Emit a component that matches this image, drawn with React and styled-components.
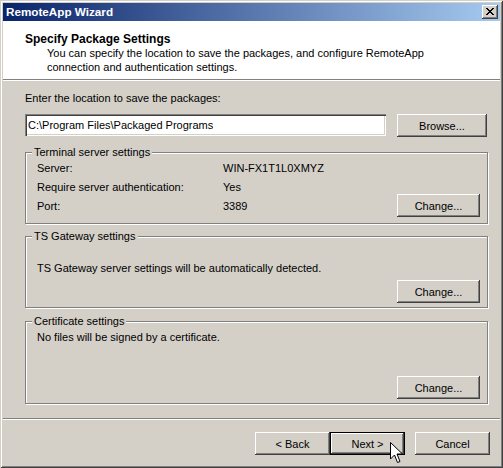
import React from 'react';
import styled, { createGlobalStyle } from 'styled-components';

const Global = createGlobalStyle`
  html, body { margin: 0; padding: 0; background: #d4d0c8; }
  body {
    font-family: "Liberation Sans", Arial, sans-serif;
    font-size: 11px;
    color: #000;
  }
  * { box-sizing: border-box; }
`;

const Window = styled.div`
  position: relative;
  width: 503px;
  height: 468px;
  padding: 3px;
  background: #d4d0c8;
  box-shadow: inset 1px 1px 0 #d4d0c8, inset -1px -1px 0 #404040,
    inset 2px 2px 0 #fff, inset -2px -2px 0 #808080;
  display: flex;
  flex-direction: column;
  overflow: hidden;
`;

const TitleBar = styled.div`
  flex: none;
  height: 18px;
  display: flex;
  align-items: center;
  justify-content: space-between;
  padding: 0 2px 0 3px;
  background: linear-gradient(to right, #0a246a 0%, #a6caf0 100%);
`;

const TitleText = styled.span`
  color: #fff;
  font-weight: bold;
  font-size: 11.7px;
  line-height: 14px;
`;

const Bevel = `
  background: #d4d0c8;
  box-shadow: inset -1px -1px 0 #404040, inset 1px 1px 0 #fff,
    inset -2px -2px 0 #808080, inset 2px 2px 0 #d4d0c8;
`;

const CloseButton = styled.div`
  ${Bevel}
  width: 16px;
  height: 14px;
  display: flex;
  align-items: center;
  justify-content: center;
  padding: 0 1px 1px 0;
`;

const Header = styled.div`
  flex: none;
  height: 58px;
  background: #fff;
  padding: 11px 0 0 22px;
`;

const Heading = styled.div`
  font-weight: bold;
  font-size: 12px;
  line-height: 14px;
`;

const Description = styled.p`
  margin: 0 0 0 22px;
  line-height: 14px;
  max-width: 395px;
`;

const Rule = styled.div`
  flex: none;
  height: 2px;
  border-top: 1px solid #808080;
  border-bottom: 1px solid #fff;
  margin-top: ${(p) => p.$top || 0}px;
`;

const Body = styled.div`
  flex: none;
  padding: 10px 0 0 22px;
`;

const Label = styled.div`
  line-height: 14px;
`;

const PathRow = styled.div`
  display: flex;
  align-items: flex-start;
  margin-top: 9px;
`;

const TextField = styled.div`
  width: 361px;
  height: 22px;
  background: #fff;
  padding: 0 0 0 3px;
  display: flex;
  align-items: center;
  box-shadow: inset 1px 1px 0 #808080, inset 2px 2px 0 #404040,
    inset -1px -1px 0 #fff, inset -2px -2px 0 #d4d0c8;
`;

const Button = styled.div`
  ${Bevel}
  flex: none;
  width: ${(p) => p.$w || 75}px;
  height: 23px;
  margin-left: ${(p) => p.$ml || 0}px;
  display: flex;
  align-items: center;
  justify-content: center;
  line-height: 14px;
  ${(p) =>
    p.$default &&
    `
    box-shadow: inset 0 0 0 1px #000, inset -2px -2px 0 #404040, inset 2px 2px 0 #fff,
      inset -3px -3px 0 #808080;
  `}
`;

const Group = styled.div`
  position: relative;
  width: 463px;
  height: ${(p) => p.$h}px;
  margin-top: ${(p) => p.$top}px;
  border: 1px solid #808080;
  box-shadow: 1px 1px 0 #fff, inset 1px 1px 0 #fff;
  padding: ${(p) => p.$pt}px 7px 4px 11px;
  display: flex;
  flex-direction: column;
`;

const Legend = styled.span`
  position: absolute;
  top: -8px;
  left: ${(p) => p.$left || 6}px;
  padding: 0 2px;
  background: #d4d0c8;
  line-height: 14px;
`;

const GroupRow = styled.div`
  display: flex;
  align-items: flex-end;
  justify-content: space-between;
`;

const InfoGrid = styled.div`
  display: grid;
  grid-template-columns: 186px auto;
  row-gap: 5px;
  line-height: 14px;
  padding-bottom: 4px;
`;

const Note = styled.div`
  line-height: 14px;
`;

const ButtonEnd = styled.div`
  display: flex;
  justify-content: flex-end;
  margin-top: ${(p) => (p.$auto ? 'auto' : `${p.$mt}px`)};
`;

const Footer = styled.div`
  display: flex;
  justify-content: flex-end;
  padding: 12px 10px 0 0;
`;

const Cursor = styled.svg`
  position: absolute;
  left: 390px;
  top: 442px;
  pointer-events: none;
`;

export default function App() {
  return (
    <>
      <Global />
      <Window>
        <TitleBar>
          <TitleText>RemoteApp Wizard</TitleText>
          <CloseButton>
            <svg width="8" height="7" viewBox="0 0 8 7" shapeRendering="crispEdges">
              <path
                d="M0 0h2v1h-2zM6 0h2v1h-2zM1 1h2v1h-2zM5 1h2v1h-2zM2 2h4v1h-4zM3 3h2v1h-2zM2 4h4v1h-4zM1 5h2v1h-2zM5 5h2v1h-2zM0 6h2v1h-2zM6 6h2v1h-2z"
                fill="#000"
              />
            </svg>
          </CloseButton>
        </TitleBar>
        <Header>
          <Heading>Specify Package Settings</Heading>
          <Description>
            You can specify the location to save the packages, and configure RemoteApp connection
            and authentication settings.
          </Description>
        </Header>
        <Rule />
        <Body>
          <Label>Enter the location to save the packages:</Label>
          <PathRow>
            <TextField>C:\Program Files\Packaged Programs</TextField>
            <Button $w={90} $ml={11}>
              Browse...
            </Button>
          </PathRow>

          <Group $h={72} $top={15} $pt={8}>
            <Legend>Terminal server settings</Legend>
            <GroupRow>
              <InfoGrid>
                <span>Server:</span>
                <span>WIN-FX1T1L0XMYZ</span>
                <span>Require server authentication:</span>
                <span>Yes</span>
                <span>Port:</span>
                <span>3389</span>
              </InfoGrid>
              <Button $w={83}>Change...</Button>
            </GroupRow>
          </Group>

          <Group $h={72} $top={12} $pt={24}>
            <Legend>TS Gateway settings</Legend>
            <Note>TS Gateway server settings will be automatically detected.</Note>
            <ButtonEnd $mt={5}>
              <Button $w={83}>Change...</Button>
            </ButtonEnd>
          </Group>

          <Group $h={83} $top={13} $pt={8}>
            <Legend>Certificate settings</Legend>
            <Note>No files will be signed by a certificate.</Note>
            <ButtonEnd $auto>
              <Button $w={83}>Change...</Button>
            </ButtonEnd>
          </Group>
        </Body>
        <Rule $top={14} />
        <Footer>
          <Button $w={75}>&lt; Back</Button>
          <Button $w={75} $default>
            Next &gt;
          </Button>
          <Button $w={75} $ml={10}>
            Cancel
          </Button>
        </Footer>
        <Cursor width="14" height="22" viewBox="0 0 14 22">
          <path
            d="M0.5 0.5 L0.5 17 L4.5 13 L7.5 20.5 L10 19.5 L7 12 L12.5 12 Z"
            fill="#fff"
            stroke="#000"
            strokeWidth="1"
            strokeLinejoin="miter"
          />
        </Cursor>
      </Window>
    </>
  );
}
